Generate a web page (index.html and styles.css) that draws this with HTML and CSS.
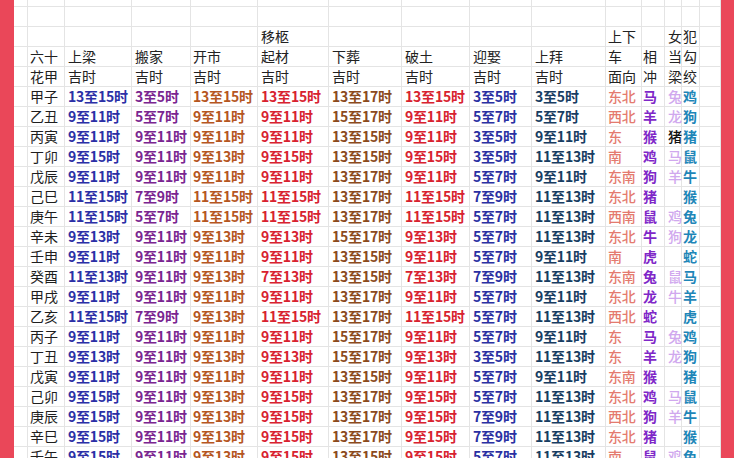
FILE: index.html
```html
<!DOCTYPE html>
<html lang="zh">
<head>
<meta charset="utf-8">
<title>六十花甲吉时</title>
<link rel="stylesheet" href="styles.css">
</head>
<body>
<div class="frame">
  <div class="edge"></div>
  <div class="sheet">
    <div class="row top"><div></div><div></div><div></div><div></div><div></div><div></div><div></div><div></div><div></div><div></div><div></div><div></div><div></div><div></div><div></div></div>
    <div class="row"><div></div><div></div><div></div><div></div><div></div><div></div><div></div><div></div><div></div><div></div><div></div><div></div><div></div><div></div><div></div></div>
    <div class="row hd"><div></div><div></div><div></div><div></div><div></div><div>移柩</div><div></div><div></div><div></div><div></div><div>上下</div><div></div><div>女</div><div>犯</div><div></div></div>
    <div class="row hd"><div></div><div>六十</div><div>上梁</div><div>搬家</div><div>开市</div><div>起材</div><div>下葬</div><div>破土</div><div>迎娶</div><div>上拜</div><div>车</div><div>相</div><div>当</div><div>勾</div><div></div></div>
    <div class="row hd"><div></div><div>花甲</div><div>吉时</div><div>吉时</div><div>吉时</div><div>吉时</div><div>吉时</div><div>吉时</div><div>吉时</div><div>吉时</div><div>面向</div><div>冲</div><div>梁</div><div>绞</div><div></div></div>

    <div class="row dr"><div></div><div>甲子</div><div>13至15时</div><div>3至5时</div><div>13至15时</div><div>13至15时</div><div>13至17时</div><div>13至15时</div><div>3至5时</div><div>3至5时</div><div>东北</div><div>马</div><div>兔</div><div>鸡</div><div></div></div>
    <div class="row dr"><div></div><div>乙丑</div><div>9至11时</div><div>5至7时</div><div>9至11时</div><div>9至11时</div><div>15至17时</div><div>9至11时</div><div>5至7时</div><div>5至7时</div><div>西北</div><div>羊</div><div>龙</div><div>狗</div><div></div></div>
    <div class="row dr"><div></div><div>丙寅</div><div>9至11时</div><div>9至11时</div><div>9至11时</div><div>9至11时</div><div>13至15时</div><div>9至11时</div><div>3至5时</div><div>9至11时</div><div>东</div><div>猴</div><div class="blk">猪</div><div>猪</div><div></div></div>
    <div class="row dr"><div></div><div>丁卯</div><div>9至15时</div><div>9至11时</div><div>9至13时</div><div>9至15时</div><div>13至15时</div><div>9至15时</div><div>3至5时</div><div>11至13时</div><div>南</div><div>鸡</div><div>马</div><div>鼠</div><div></div></div>
    <div class="row dr"><div></div><div>戊辰</div><div>9至11时</div><div>9至11时</div><div>9至11时</div><div>9至11时</div><div>13至17时</div><div>9至11时</div><div>5至7时</div><div>9至11时</div><div>东南</div><div>狗</div><div>羊</div><div>牛</div><div></div></div>
    <div class="row dr"><div></div><div>己巳</div><div>11至15时</div><div>7至9时</div><div>11至15时</div><div>11至15时</div><div>13至17时</div><div>11至15时</div><div>7至9时</div><div>11至13时</div><div>东北</div><div>猪</div><div></div><div>猴</div><div></div></div>
    <div class="row dr"><div></div><div>庚午</div><div>11至15时</div><div>5至7时</div><div>11至15时</div><div>11至15时</div><div>13至17时</div><div>11至15时</div><div>5至7时</div><div>11至13时</div><div>西南</div><div>鼠</div><div>鸡</div><div>兔</div><div></div></div>
    <div class="row dr"><div></div><div>辛未</div><div>9至13时</div><div>9至11时</div><div>9至13时</div><div>9至13时</div><div>15至17时</div><div>9至13时</div><div>5至7时</div><div>11至13时</div><div>东北</div><div>牛</div><div>狗</div><div>龙</div><div></div></div>
    <div class="row dr"><div></div><div>壬申</div><div>9至11时</div><div>9至11时</div><div>9至11时</div><div>9至11时</div><div>13至15时</div><div>9至11时</div><div>5至7时</div><div>9至11时</div><div>南</div><div>虎</div><div></div><div>蛇</div><div></div></div>
    <div class="row dr"><div></div><div>癸酉</div><div>11至13时</div><div>9至11时</div><div>9至13时</div><div>7至13时</div><div>13至15时</div><div>7至13时</div><div>7至9时</div><div>11至13时</div><div>东南</div><div>兔</div><div>鼠</div><div>马</div><div></div></div>
    <div class="row dr"><div></div><div>甲戌</div><div>9至11时</div><div>9至11时</div><div>9至11时</div><div>9至11时</div><div>13至17时</div><div>9至11时</div><div>5至7时</div><div>9至11时</div><div>东北</div><div>龙</div><div>牛</div><div>羊</div><div></div></div>
    <div class="row dr"><div></div><div>乙亥</div><div>11至15时</div><div>7至9时</div><div>9至13时</div><div>11至15时</div><div>13至17时</div><div>11至15时</div><div>5至7时</div><div>11至13时</div><div>西北</div><div>蛇</div><div></div><div>虎</div><div></div></div>
    <div class="row dr"><div></div><div>丙子</div><div>9至11时</div><div>9至11时</div><div>9至11时</div><div>9至11时</div><div>15至17时</div><div>9至11时</div><div>5至7时</div><div>9至11时</div><div>东</div><div>马</div><div>兔</div><div>鸡</div><div></div></div>
    <div class="row dr"><div></div><div>丁丑</div><div>9至13时</div><div>9至11时</div><div>9至13时</div><div>9至13时</div><div>15至17时</div><div>9至13时</div><div>3至5时</div><div>11至13时</div><div>东</div><div>羊</div><div>龙</div><div>狗</div><div></div></div>
    <div class="row dr"><div></div><div>戊寅</div><div>9至11时</div><div>9至11时</div><div>9至11时</div><div>9至11时</div><div>13至15时</div><div>9至11时</div><div>5至7时</div><div>9至11时</div><div>东南</div><div>猴</div><div></div><div>猪</div><div></div></div>
    <div class="row dr"><div></div><div>己卯</div><div>9至15时</div><div>9至11时</div><div>9至13时</div><div>9至15时</div><div>13至17时</div><div>9至15时</div><div>5至7时</div><div>11至13时</div><div>东北</div><div>鸡</div><div>马</div><div>鼠</div><div></div></div>
    <div class="row dr"><div></div><div>庚辰</div><div>9至15时</div><div>9至11时</div><div>9至13时</div><div>9至15时</div><div>13至17时</div><div>9至15时</div><div>7至9时</div><div>11至13时</div><div>西北</div><div>狗</div><div>羊</div><div>牛</div><div></div></div>
    <div class="row dr"><div></div><div>辛巳</div><div>9至15时</div><div>9至11时</div><div>9至13时</div><div>9至15时</div><div>13至17时</div><div>9至15时</div><div>7至9时</div><div>11至13时</div><div>东北</div><div>猪</div><div></div><div>猴</div><div></div></div>
    <div class="row dr"><div></div><div>壬午</div><div>9至15时</div><div>9至11时</div><div>9至13时</div><div>9至15时</div><div>13至15时</div><div>9至15时</div><div>5至7时</div><div>11至13时</div><div>南</div><div>鼠</div><div>鸡</div><div>兔</div><div></div></div>
  </div>
  <div class="edge right"></div>
</div>
</body>
</html>
```

FILE: styles.css
```css
* { box-sizing: border-box; }
html, body { margin: 0; padding: 0; background: #ffffff; }
body { width: 734px; height: 458px; overflow: hidden; font-family: "Noto Sans CJK SC", "Noto Sans", sans-serif; }
.frame { display: flex; width: 734px; height: 458px; overflow: hidden; }
.edge { width: 14px; flex: none; background: #ea4759; }
.edge.right { width: 13px; }
.sheet { flex: 1; display: flex; flex-direction: column; }
.row { display: grid; grid-template-columns: 14px 37px 67px 59px 67px 71px 73px 68px 62px 74px 36px 23px 17px 18px 21px; height: 20px; flex: none; }
.row.top { height: 7px; }
.row > div { border-right: 1px solid #e4e4e4; border-bottom: 1px solid #e4e4e4; padding-left: 3px; font-size: 14px; line-height: 19px; white-space: nowrap; overflow: visible; color: #222222; }
.row > div:nth-child(2) { padding-left: 2px; }
.row > div:nth-child(5) { padding-left: 2px; }
.row > div:nth-child(11) { padding-left: 2px; }
.row > div:nth-child(12) { padding-left: 1px; }
.row > div:nth-child(14) { padding-left: 1px; }
.dr > div { font-weight: 700; letter-spacing: -0.2px; }
.dr > div:nth-child(2) { font-weight: 400; color: #1e1e1e; letter-spacing: 0; }
.dr > div:nth-child(3) { color: #2b2fa6; }
.dr > div:nth-child(4) { color: #7a2590; }
.dr > div:nth-child(5) { color: #b5561f; }
.dr > div:nth-child(6) { color: #d8222f; }
.dr > div:nth-child(7) { color: #8b4a1c; }
.dr > div:nth-child(8) { color: #d8222f; }
.dr > div:nth-child(9) { color: #2a30a2; }
.dr > div:nth-child(10) { color: #183d62; }
.dr > div:nth-child(11) { color: #e47a6e; font-weight: 500; }
.dr > div:nth-child(12) { color: #7f27c8; }
.dr > div:nth-child(13) { color: #d0a8ee; font-weight: 500; }
.dr > div:nth-child(14) { color: #1e86b8; }
.dr > div.blk { color: #111111; }
```
